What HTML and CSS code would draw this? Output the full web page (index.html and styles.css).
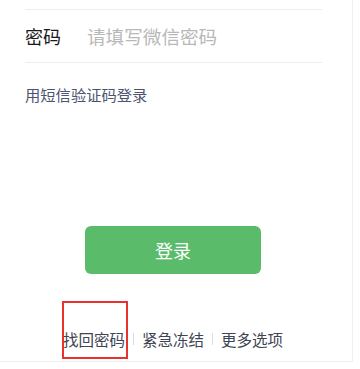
FILE: index.html
```html
<!DOCTYPE html>
<html lang="zh">
<head>
<meta charset="utf-8">
<link rel="stylesheet" href="styles.css">
</head>
<body>
<div class="screen">
  <div class="form">
    <div class="field">
      <span class="label">密码</span>
      <span class="placeholder">请填写微信密码</span>
    </div>
    <a class="sms">用短信验证码登录</a>
    <div class="btn-wrap"><button class="login">登录</button></div>
    <div class="footer">
      <span class="item highlight">找回密码<span class="mark"></span></span>
      <span class="sep"></span>
      <span class="item">紧急冻结</span>
      <span class="sep"></span>
      <span class="item">更多选项</span>
    </div>
  </div>
</div>
</body>
</html>
```
FILE: styles.css
```css
html, body { margin: 0; padding: 0; background: #fff; }
body { font-family: "Noto Sans CJK SC", "Noto Sans", sans-serif; width: 360px; height: 369px; overflow: hidden; }
.screen {
  width: 353px;
  height: 362px;
  border-right: 1px solid #f0f0f0;
  border-bottom: 1px solid #eeeeee;
  box-sizing: border-box;
}
.form { padding-top: 9px; }
.field {
  margin-left: 25px;
  width: 297px;
  height: 52px;
  border-top: 1px solid #eeeeee;
  border-bottom: 1px solid #eeeeee;
  display: flex;
  align-items: center;
}
.label { font-size: 18px; color: #1a1a1a; width: 62px; line-height: 1; }
.placeholder { font-size: 18.6px; color: #b8b8b8; line-height: 1; }
.sms {
  display: block;
  margin: 22px 0 0 25px;
  font-size: 15.3px;
  line-height: 18px;
  color: #4b5570;
}
.btn-wrap { padding: 123px 0 0 85px; }
.login {
  display: block;
  width: 176px;
  height: 48px;
  border: 0;
  border-radius: 6px;
  background: #5abc6b;
  color: #fff;
  font-family: inherit;
  font-size: 18px;
  padding: 0;
}
.footer {
  margin-top: 56px;
  padding-left: 63px;
  display: flex;
  align-items: center;
  font-size: 15.5px;
  line-height: 18px;
  color: #3e4452;
}
.item { position: relative; }
.sep { width: 1px; height: 12px; background: #dcdcdc; margin: 0 8px; }
.mark {
  position: absolute;
  left: -1px;
  top: -29px;
  width: 62px;
  height: 54px;
  border: 2px solid #e8322f;
}
```
